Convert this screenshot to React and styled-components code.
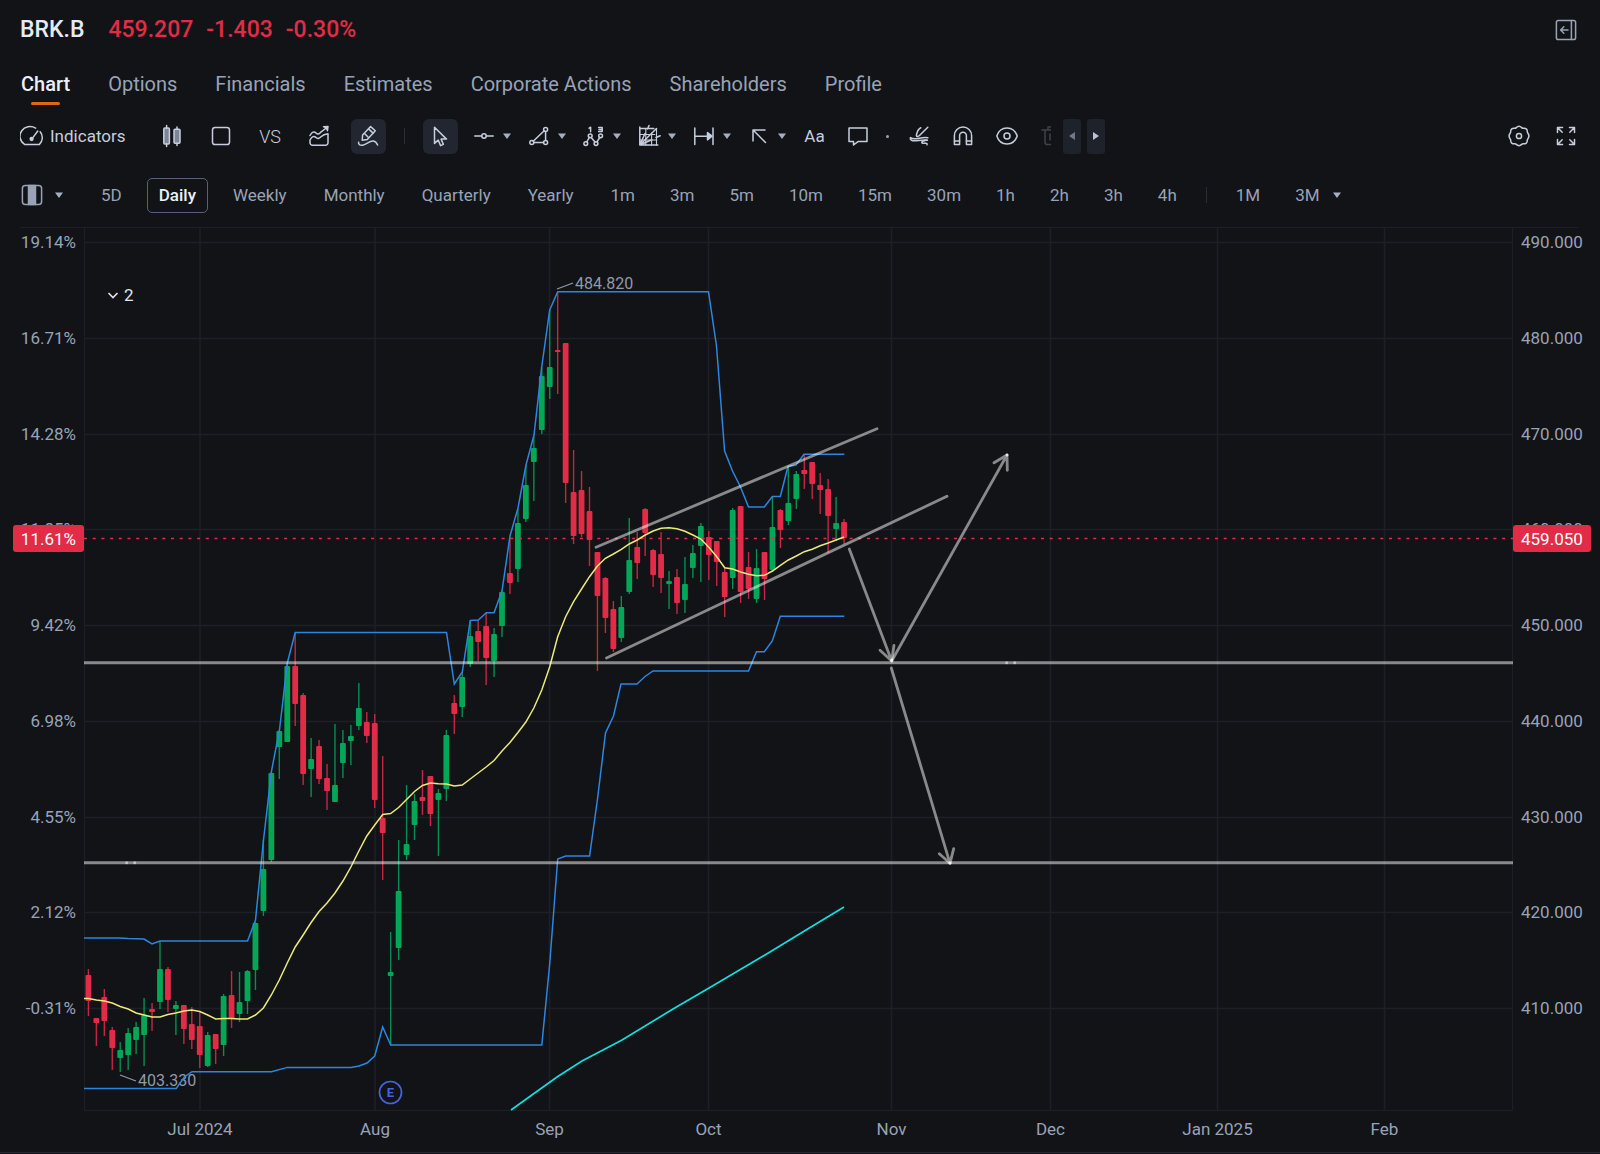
import React from 'react';
import styled, { createGlobalStyle } from 'styled-components';

const GlobalStyle = createGlobalStyle`
  * {
    box-sizing: border-box;
  }
  body {
    margin: 0;
    background: #121316;
    color: #98a3b8;
    font-family: Roboto, 'Liberation Sans', sans-serif;
    font-size: 17px;
  }
  button {
    margin: 0;
    padding: 0;
    border: 0;
    background: none;
    color: inherit;
    font: inherit;
    cursor: pointer;
  }
`;

const Page = styled.div`
  border-bottom: 1px solid #24272f;
`;

const Header = styled.header`
  display: flex;
  align-items: center;
  justify-content: space-between;
  height: 59px;
  padding: 0 17px 0 20px;
`;

const Quote = styled.div`
  display: flex;
  align-items: baseline;
  font-size: 23px;
  font-weight: 500;
`;

const Ticker = styled.h1`
  margin: 0 24px 0 0;
  color: #e4ebf7;
  font-size: 23px;
  font-weight: 500;
`;

const Change = styled.span`
  margin-right: 13px;
  color: #e02d46;
`;

const Tabs = styled.nav`
  display: flex;
  gap: 38px;
  height: 50px;
  padding: 0 21px;
`;

const Tab = styled.a`
  position: relative;
  height: 46px;
  line-height: 50px;
  font-size: 20px;
  text-decoration: none;
  color: ${(p) => (p.$active ? '#eaf0fb' : '#98a3b8')};
  font-weight: ${(p) => (p.$active ? 500 : 400)};
  &::after {
    content: '';
    display: ${(p) => (p.$active ? 'block' : 'none')};
    position: absolute;
    left: 50%;
    bottom: 0;
    width: 29px;
    height: 3px;
    margin-left: -15px;
    border-radius: 2px;
    background: #e0690f;
  }
`;

const Toolbar = styled.div`
  display: flex;
  align-items: center;
  justify-content: space-between;
  height: 54px;
  padding: 0 17px 0 20px;
  color: #c6cede;
`;

const Tools = styled.div`
  display: flex;
  flex-shrink: 0;
  align-items: center;
  gap: ${(p) => p.$gap || 0}px;
  margin-left: ${(p) => p.$before || 0}px;
`;

const Indicators = styled.button`
  display: flex;
  align-items: center;
  gap: 6px;
`;

const ToolButton = styled.button`
  display: flex;
  align-items: center;
  justify-content: center;
  width: 35px;
  height: 35px;
  border-radius: 6px;
  background: ${(p) => (p.$active ? '#222630' : 'transparent')};
`;

const CompareButton = styled(ToolButton)`
  font-size: 18px;
  font-weight: 300;
`;

const DrawButton = styled.button`
  display: flex;
  align-items: center;
  justify-content: center;
  gap: 7px;
  min-width: 24px;
  height: 35px;
`;

const TextButton = styled(DrawButton)`
  width: 26px;
`;

const Divider = styled.span`
  width: 1px;
  height: 16px;
  margin-left: ${(p) => p.$space}px;
  margin-right: ${(p) => p.$space}px;
  background: #292d36;
`;

const Dot = styled.span`
  width: 3px;
  height: 3px;
  border-radius: 2px;
  background: #98a3b8;
`;

const Faded = styled.span`
  flex-shrink: 0;
  width: 12px;
  height: 24px;
  overflow: hidden;
  opacity: 0.25;
`;

const PageButton = styled.button`
  display: flex;
  align-items: center;
  justify-content: center;
  width: 18px;
  height: 35px;
  border-radius: 3px;
  background: #1e222b;
  color: ${(p) => (p.disabled ? '#70798b' : '#b8c2d6')};
`;

const Periods = styled.div`
  display: flex;
  align-items: center;
  height: 65px;
  margin: 0 22px 0 20px;
  border-bottom: 1px solid #1c1f26;
`;

const Period = styled.button`
  display: flex;
  align-items: center;
  gap: 13px;
  height: 35px;
  padding: 0 11px;
  border: 1px solid ${(p) => (p.$active ? '#56627a' : 'transparent')};
  border-radius: 5px;
  color: ${(p) => (p.$active ? '#eaf0fb' : 'inherit')};
  font-weight: ${(p) => (p.$active ? 500 : 400)};
`;

const LayoutButton = styled.button`
  display: flex;
  align-items: center;
  gap: 11px;
`;

const ChartArea = styled.main`
  position: relative;
`;

const Legend = styled.button`
  position: absolute;
  top: 55px;
  left: 106px;
  display: flex;
  align-items: center;
  gap: 4px;
  height: 24px;
  color: #dfe5f0;
`;

const ChartSvg = styled.svg`
  display: block;
  width: 100%;
  height: auto;
  font-family: Roboto, 'Liberation Sans', sans-serif;
  font-size: 17px;
  fill: none;
`;

const AxisText = styled.text`
  fill: #98a3b8;
`;

const TagText = styled.text`
  fill: #ffffff;
`;

const PointText = styled.text`
  fill: #9199a8;
  font-size: 16px;
`;

const Icon = ({ children }) => (
  <svg
    width='24'
    height='24'
    viewBox='0 0 24 24'
    fill='none'
    stroke='currentColor'
    strokeWidth='1.5'
    strokeLinecap='round'
    strokeLinejoin='round'
    aria-hidden='true'
  >
    {children}
  </svg>
);

const Caret = () => (
  <svg width='8' height='6' viewBox='0 0 8 6' aria-hidden='true'>
    <path d='M0 0.5h8L4 6z' fill='#a5afc3' />
  </svg>
);

const icons = {
  gauge: (
    <>
      <path d='M15.6 4.1A10 9.6 0 0 0 4.6 20.4h14.8A10 9.6 0 0 0 20.2 7.8' />
      <path d='M12.3 14.4 17.8 7' />
      <circle cx='11.6' cy='15' r='1.4' fill='currentColor' />
    </>
  ),
  candles: (
    <>
      <rect x='3.8' y='4' width='5.6' height='16' rx='1' fill='#7d8595' />
      <path d='M6.6 1.6V4M6.6 20v2.6' />
      <rect x='14' y='5.2' width='6' height='14' rx='1' fill='#7d8595' />
      <path d='M17 3v2M17 19.4v2' />
    </>
  ),
  square: <rect x='3.5' y='3.5' width='17' height='17' rx='2.6' />,
  area: (
    <>
      <path d='M3 11.5c2-3.5 4-4.5 6-2.5 1.5 1.5 3 1.2 4.500-.6L20 3.500' />
      <path d='M16.5 2.800 21 2.500l-.6 4.300' fill='currentColor' />
      <path d='M3 16c2-3.800 4-4.500 6-2.500 1.500 1.500 3 1.200 5-.8 2-2 4-2.700 7-3v9a2.600 2.600 0 0 1-2.600 2.600H5.600A2.600 2.600 0 0 1 3 18.700z' />
    </>
  ),
  pencil: (
    <>
      <path d='m6.200 16.200.4-5.200 8-8.400 4.700 4.200-8 8.600z' />
      <path d='m12.600 4.900 4.500 4.200' />
      <path d='M8.800 9.800 12 13' />
      <path d='M2.600 18.200c-.6 2.600 2 3.400 4.700 2.800C10.500 20.300 14 16.500 17.500 17c2.200.3 3.200 2 4.100 4' />
    </>
  ),
  cursor: <path d='M6.500 3.200v16.200l3.700-3.300 2.400 5.500 2.800-1.200-2.300-5.300h5.400z' />,
  line: (
    <>
      <path d='M2.800 12h6.700M14.500 12h6.700' />
      <circle cx='12' cy='12' r='2.200' />
    </>
  ),
  triangle: (
    <>
      <circle cx='4.800' cy='18.600' r='2' />
      <circle cx='18.600' cy='18.600' r='2' />
      <circle cx='18.600' cy='5.400' r='2' />
      <path d='M6.800 18.600h9.800M18.600 7.400v9.200M6.200 17.200 17.200 6.800' />
    </>
  ),
  waves: (
    <>
      <circle cx='3.800' cy='19.600' r='1.900' />
      <circle cx='8.200' cy='11.800' r='1.900' />
      <circle cx='14' cy='19.600' r='1.900' />
      <circle cx='18.600' cy='11.800' r='1.900' />
      <path d='m4.800 17.900 2.500-4.400M9.200 13.500l3.800 4.500M15 17.900l2.700-4.400' />
      <path d='M7.200 4.200 8.600 3.200v4.600M16.600 3.500h3.600v4h-3.600M17 5.500h3' />
    </>
  ),
  gann: (
    <>
      <path d='M2.800 3v18h18M2.800 4.600h14M2.800 21 19.500 4.500M2.800 21 8 9.500M10.500 5 12 1.500M2.800 21l12-5.300M19 13.500l4.200-1.800' />
      <path d='M2.800 10.500h15M2.800 16h17M8.800 5v16M14.600 9v12M19.500 4.500V21' strokeWidth='1.100' />
    </>
  ),
  range: (
    <>
      <path d='M2.800 4v16.500M21 4v16.500M3.500 12.200h13' />
      <path d='m15.500 8.600 4.500 3.600-4.500 3.600z' fill='currentColor' />
    </>
  ),
  arrow: <path d='M6 17V6h12M6.300 6.300 18.500 18.500' />,
  comment: <path d='M3 4h18v13.600h-9L7.500 21v-3.400H3z' />,
  brush: (
    <>
      <path d='M20.800 3.200 12.500 11.500c-1.600 1.500-3.600 1.200-3-.8.700-2.400 1.200-5.600 4.300-6.900' />
      <path d='M20.800 13.800c-3.500-.8-7 .2-10.400.8-2.600.4-5 .6-7-1-.8 2.200 1.600 3.300 4.200 3.200 4-.2 8-1 12.800-.6' />
      <path d='M20 16.200c-2 .4-5 .8-5.200 2.200-.1 1.200 2 .9 3.200.8 1.500-.2 2.400.4 2 1.500' />
    </>
  ),
  magnet: (
    <>
      <path d='M3.400 20.600v-9a8.600 8.600 0 0 1 17.200 0v9h-5.200v-9a3.400 3.400 0 0 0-6.800 0v9z' />
      <path d='M3.400 17h5.200M15.400 17h5.200' />
    </>
  ),
  eye: (
    <>
      <path d='M1.800 12C3.600 6.600 7.200 4 12 4s8.400 2.600 10.200 8C20.400 17.400 16.800 20 12 20S3.600 17.400 1.800 12z' />
      <circle cx='12' cy='12' r='3' />
    </>
  ),
  trash: <path d='M3 6h18M6 6v12a2.600 2.600 0 0 0 2.600 2.600h7M11 10v6M9 6V3h6' />,
  settings: (
    <>
      <path d='M9.300 3.600c1.700-1.700 3.700-1.700 5.400 0 .5.500 1 .7 1.700.6 2.400-.3 3.900 1 3.900 3.300 0 .7.200 1.200.6 1.700 1.300 1.800 1.300 3.800 0 5.600-.4.500-.6 1-.6 1.700 0 2.300-1.500 3.600-3.900 3.300-.7-.1-1.200.1-1.700.6-1.700 1.700-3.700 1.700-5.400 0-.5-.5-1-.7-1.700-.6-2.400.3-3.900-1-3.900-3.300 0-.7-.2-1.200-.6-1.700-1.300-1.800-1.300-3.800 0-5.600.4-.5.600-1 .6-1.700 0-2.300 1.500-3.600 3.900-3.300.7.100 1.200-.1 1.700-.6z' />
      <circle cx='12' cy='12' r='2.600' />
    </>
  ),
  expand: (
    <path d='M3.500 8.500v-5h5M3.800 3.800l4.400 4.400M15.500 3.500h5v5M20.200 3.800l-4.400 4.400M3.500 15.500v5h5M3.800 20.200l4.400-4.400M20.500 15.500v5h-5M20.200 20.200l-4.400-4.400' />
  ),
  panel: (
    <>
      <rect x='2.400' y='2.400' width='19.200' height='19.200' rx='1.800' />
      <path d='M17.400 2.400v19.200M14 12H7M9.800 8.800 6.600 12l3.200 3.200' />
    </>
  ),
  columns: (
    <>
      <rect x='2.400' y='2.400' width='19.200' height='19.200' rx='3' />
      <path d='M8.500 2.400h7v19.200h-7z' fill='currentColor' />
    </>
  ),
};

const tabs = [
  'Chart',
  'Options',
  'Financials',
  'Estimates',
  'Corporate Actions',
  'Shareholders',
  'Profile',
];

const drawTools = [
  { name: 'Lines', icon: icons.line },
  { name: 'Shapes', icon: icons.triangle },
  { name: 'Waves', icon: icons.waves },
  { name: 'Gann', icon: icons.gann },
  { name: 'Range', icon: icons.range },
  { name: 'Arrows', icon: icons.arrow },
];

const dayPeriods = ['5D', 'Daily', 'Weekly', 'Monthly', 'Quarterly', 'Yearly'];

const minutePeriods = [
  '1m', '3m', '5m', '10m', '15m', '30m', '1h', '2h', '3h', '4h',
];

// chart coordinates
const LEFT = 84;
const RIGHT = 1513;
const TOP = 228;
const BOTTOM = 1110;
const FIRST_BAR = 88.4;
const BAR_STEP = 7.954;

const rows = [
  { y: 242, percent: '19.14%', price: '490.000' },
  { y: 338, percent: '16.71%', price: '480.000' },
  { y: 434, percent: '14.28%', price: '470.000' },
  { y: 529, percent: '11.85%', price: '460.000' },
  { y: 625, percent: '9.42%', price: '450.000' },
  { y: 721, percent: '6.98%', price: '440.000' },
  { y: 817, percent: '4.55%', price: '430.000' },
  { y: 912, percent: '2.12%', price: '420.000' },
  { y: 1008, percent: '-0.31%', price: '410.000' },
];

const months = [
  { x: 200, label: 'Jul 2024' },
  { x: 375, label: 'Aug' },
  { x: 549.5, label: 'Sep' },
  { x: 708.5, label: 'Oct' },
  { x: 891.5, label: 'Nov' },
  { x: 1050.5, label: 'Dec' },
  { x: 1217.5, label: 'Jan 2025' },
  { x: 1384.5, label: 'Feb' },
];

// [up, high, body top, body bottom, low]
const candles = [
  [0, 969, 975, 1001, 1016], [0, 1018, 1018, 1023, 1046], [0, 989, 997, 1021, 1036],
  [0, 1027, 1030, 1048, 1070], [1, 1042, 1050, 1058, 1072], [1, 1028, 1033, 1055, 1070],
  [1, 1022, 1027, 1040, 1054], [1, 998, 1015, 1035, 1066], [0, 1003, 1009, 1012, 1031],
  [1, 941, 969, 1002, 1009], [0, 967, 969, 1000, 1012], [1, 1001, 1005, 1009, 1035],
  [0, 1005, 1005, 1029, 1044], [0, 1007, 1024, 1040, 1049], [0, 1011, 1026, 1055, 1068],
  [1, 1032, 1035, 1066, 1067], [0, 1034, 1034, 1049, 1064], [1, 994, 996, 1045, 1056],
  [0, 971, 995, 1019, 1028], [1, 972, 1002, 1014, 1022], [1, 970, 971, 1001, 1014],
  [1, 922, 923, 970, 990], [1, 840, 869, 911, 916], [1, 772, 773, 860, 862],
  [1, 730, 731, 747, 779], [1, 664, 666, 742, 742], [0, 633, 666, 704, 726],
  [0, 693, 695, 774, 785], [1, 738, 759, 769, 797], [0, 740, 746, 779, 784],
  [0, 764, 778, 791, 810], [1, 724, 785, 802, 802], [1, 730, 743, 763, 778],
  [1, 725, 736, 741, 765], [1, 683, 708, 726, 730], [0, 712, 722, 736, 743],
  [0, 714, 723, 800, 808], [0, 756, 818, 833, 880], [1, 932, 972, 976, 1045],
  [1, 840, 891, 948, 960], [1, 785, 844, 855, 860], [1, 794, 801, 825, 840],
  [0, 770, 797, 801, 815], [0, 776, 776, 814, 826], [1, 789, 793, 800, 856],
  [1, 730, 735, 789, 801], [0, 695, 703, 714, 734], [1, 672, 677, 707, 717],
  [1, 621, 636, 664, 667], [0, 620, 631, 642, 661], [0, 613, 626, 658, 685],
  [1, 628, 634, 661, 677], [1, 590, 592, 626, 637], [0, 537, 573, 583, 594],
  [1, 509, 523, 569, 582], [1, 465, 485, 519, 522], [1, 436, 448, 462, 501],
  [1, 367, 376, 430, 434], [1, 310, 367, 387, 399], [0, 292, 350, 352, 394],
  [0, 343, 343, 483, 503], [0, 450, 492, 536, 544], [0, 471, 490, 534, 537],
  [0, 487, 511, 540, 566], [0, 552, 552, 596, 671], [0, 577, 578, 618, 633],
  [0, 601, 609, 649, 652], [1, 596, 607, 638, 642], [1, 518, 560, 592, 594],
  [0, 532, 547, 563, 579], [0, 508, 509, 533, 556], [0, 549, 550, 575, 587],
  [0, 532, 554, 578, 593], [1, 571, 581, 584, 609], [0, 569, 577, 603, 614],
  [1, 557, 584, 600, 613], [1, 545, 553, 568, 578], [1, 523, 526, 546, 582],
  [0, 531, 537, 555, 580], [0, 541, 541, 562, 586], [0, 568, 572, 597, 617],
  [1, 508, 510, 578, 589], [0, 506, 506, 592, 603], [0, 552, 567, 589, 599],
  [1, 549, 568, 599, 603], [0, 552, 552, 579, 600], [1, 497, 527, 570, 572],
  [0, 509, 510, 530, 548], [1, 467, 503, 521, 525], [1, 471, 474, 499, 509],
  [0, 455, 470, 474, 489], [0, 462, 462, 484, 499], [0, 473, 485, 490, 514],
  [0, 479, 489, 516, 553], [1, 497, 523, 529, 541], [0, 519, 522, 538, 544],
];

const average = [
  998.5, 1000, 1001, 1003, 1006.5, 1009, 1013, 1015, 1017, 1017, 1014.5, 1013,
  1011, 1010, 1011.5, 1015, 1019, 1018.5, 1018.5, 1019, 1019, 1015, 1008, 995,
  980, 963, 947, 935, 922.5, 911.5, 903, 893, 881, 867, 851, 836, 825, 814.5,
  813.5, 807.5, 799.5, 791.5, 785.5, 783, 783.7, 784, 786, 785, 779, 773, 767,
  760.5, 751, 742.5, 732.5, 722, 708, 690, 666.7, 636.7, 616.7, 601.7, 589,
  576.7, 566, 558.3, 554, 549.3, 544, 540, 535, 531, 528.3, 527.7, 528.7, 531.3,
  535, 539, 547.3, 556.7, 567.7, 569, 572, 574.3, 575.7, 575.3, 571, 565.3, 560,
  556, 551.7, 549.3, 545.7, 543, 540, 537,
];

const upperBand =
  '84,938 120,938 128,938.5 144,939 152,944 160,941 247.5,941 255.5,920 263.5,840 271.5,771 279.5,730 287.3,663 295.2,632.5 446.5,632.5 454.3,684 462.3,672 470.3,620.5 478.3,620 486.3,612.7 494,612.7 502,591 510,536 518,508 526,465 534,435 541.7,367 549.7,310 557.7,291.7 708.5,291.7 716.5,346 724.6,451 732.5,471 740.5,487 748.5,507 764.3,507 772.3,496.5 780.3,496.5 788,466.5 796,465 804,454.3 844.3,454.3';

const lowerBand =
  '84,1088.5 176.3,1088.5 184.3,1077 192,1071.7 271.5,1071.7 287.3,1067.4 351,1067.4 359,1066 367,1063 374.7,1056 382.7,1027 390.7,1045 541.8,1045 549.7,964 557.7,859 565.7,856 589.6,856 597.5,799 605.5,733 613.5,716 621,684 637,684 645,676.5 653,671 748.5,671 756.5,651.7 764.3,651.7 772.3,641 780.3,616.3 844.3,616.3';

const longAverage =
  '511,1110 557,1077 582,1061 622,1040 673,1009 709,988 765,955 806,930 844,907';

const levels = [662.7, 862.7];

const drawings = [
  'M596 547.3 877 428.7',
  'M606.5 658 947 496.3',
  'M849.3 549 891.7 661M880 650.3 891.7 661 894 645.3',
  'M891.7 661 1007 455M994 462.7 1007 455 1007.3 470.3',
  'M891.3 668 950 863.3M939.3 853.7 950 863.3 953.7 848.7',
];

const handles = [
  { x: 1006.7, y: 662.7, opacity: 0.5 },
  { x: 1014.7, y: 662.7, opacity: 0.5 },
  { x: 126.7, y: 862.7, opacity: 0.5 },
  { x: 134.7, y: 862.7, opacity: 0.5 },
  { x: 891.7, y: 660, opacity: 0.8 },
  { x: 1007, y: 455, opacity: 0.8 },
  { x: 950, y: 863, opacity: 0.8 },
];

const barX = (i) => FIRST_BAR + i * BAR_STEP;

const Candle = ({ index, data }) => {
  const [up, high, top, bottom, low] = data;
  const x = barX(index);
  const color = up ? '#04a657' : '#e22c47';
  return (
    <g>
      <path d={`M${x} ${high}V${low}`} stroke={color} strokeWidth='1.4' opacity='0.85' />
      <rect x={x - 2.9} y={top} width='5.8' height={bottom - top} rx='1' fill={color} />
    </g>
  );
};

const StockChart = () => {
  return (
    <ChartSvg viewBox='0 228 1600 924' role='img' aria-label='BRK.B'>
      <g stroke='#1c2026' strokeWidth='1.5'>
        {rows.map((r) => (
          <path key={r.price} d={`M${LEFT} ${r.y + 0.5}H${RIGHT}`} />
        ))}
        {months.map((m) => (
          <path key={m.label} d={`M${m.x} ${TOP}V${BOTTOM}`} />
        ))}
      </g>
      <path d='M84.5 228V1110.5H1512.5V228' stroke='#1c2026' />

      {rows.map((r) => (
        <g key={r.price}>
          <AxisText x='76' y={r.y + 6} textAnchor='end'>
            {r.percent}
          </AxisText>
          <AxisText x='1521' y={r.y + 6}>
            {r.price}
          </AxisText>
        </g>
      ))}
      {months.map((m) => (
        <AxisText key={m.label} x={m.x} y='1135' textAnchor='middle'>
          {m.label}
        </AxisText>
      ))}

      {candles.map((c, i) => (
        <Candle key={i} index={i} data={c} />
      ))}
      <path d='M557 289 573 283M120 1075 136 1081' stroke='#9199a8' strokeWidth='1.3' />
      <PointText x='575' y='289'>484.820</PointText>
      <PointText x='138' y='1086'>403.330</PointText>

      <path
        d='M84 538.5H1513'
        stroke='#e22c47'
        strokeWidth='1.3'
        strokeDasharray='3 5.7'
      />
      <polyline points={upperBand} stroke='#2b86e0' strokeWidth='1.5' />
      <polyline points={lowerBand} stroke='#2b86e0' strokeWidth='1.5' />
      <polyline
        points={`84,998.5 ${average.map((y, i) => `${barX(i)},${y}`).join(' ')}`}
        stroke='#ece97a'
        strokeWidth='1.5'
      />
      <polyline points={longAverage} stroke='#0fe0df' strokeWidth='1.7' />

      <g stroke='#ffffff' strokeOpacity='0.5' strokeLinejoin='round'>
        {levels.map((y) => (
          <path key={y} d={`M${LEFT} ${y}H${RIGHT}`} strokeWidth='3' />
        ))}
        {drawings.map((d) => (
          <path key={d} d={d} strokeWidth='2.8' strokeLinecap='round' />
        ))}
      </g>
      {handles.map((h) => (
        <circle
          key={`${h.x}-${h.y}`}
          cx={h.x}
          cy={h.y}
          r='1.5'
          fill='#ffffff'
          fillOpacity={h.opacity}
        />
      ))}

      <circle cx='390.5' cy='1092.5' r='11' stroke='#4463e0' strokeWidth='1.7' />
      <text x='390.5' y='1097' textAnchor='middle' fontSize='13' fontWeight='700' fill='#4463e0'>
        E
      </text>

      <rect x='13' y='525' width='71' height='27' rx='3' fill='#e22c47' />
      <TagText x='76' y='544.5' textAnchor='end'>11.61%</TagText>
      <rect x='1513' y='525' width='78' height='27' rx='3' fill='#e22c47' />
      <TagText x='1521' y='544.5'>459.050</TagText>
    </ChartSvg>
  );
};

export default function App() {
  return (
    <>
      <GlobalStyle />
      <Page>
        <Header>
          <Quote>
            <Ticker>BRK.B</Ticker>
            <Change>459.207</Change>
            <Change>-1.403</Change>
            <Change>-0.30%</Change>
          </Quote>
          <ToolButton aria-label='Toggle panel'>
            <Icon>{icons.panel}</Icon>
          </ToolButton>
        </Header>

        <Tabs>
          {tabs.map((t, i) => (
            <Tab key={t} href={`#${t}`} $active={i === 0}>
              {t}
            </Tab>
          ))}
        </Tabs>

        <Toolbar>
          <Tools>
            <Indicators>
              <Icon>{icons.gauge}</Icon>
              Indicators
            </Indicators>
            <Tools $gap={14} $before={29}>
              <ToolButton aria-label='Chart type'><Icon>{icons.candles}</Icon></ToolButton>
              <ToolButton aria-label='Layout'><Icon>{icons.square}</Icon></ToolButton>
              <CompareButton>VS</CompareButton>
              <ToolButton aria-label='Overlay'><Icon>{icons.area}</Icon></ToolButton>
              <ToolButton aria-label='Draw' $active><Icon>{icons.pencil}</Icon></ToolButton>
            </Tools>
            <Divider $space={18} />
            <ToolButton aria-label='Select' $active><Icon>{icons.cursor}</Icon></ToolButton>
            <Tools $gap={16} $before={14}>
              {drawTools.map((t) => (
                <DrawButton key={t.name} aria-label={t.name}>
                  <Icon>{t.icon}</Icon>
                  <Caret />
                </DrawButton>
              ))}
              <TextButton>Aa</TextButton>
            </Tools>
            <Tools $gap={16} $before={18}>
              <DrawButton aria-label='Comment'><Icon>{icons.comment}</Icon></DrawButton>
              <Dot />
            </Tools>
            <Tools $gap={20} $before={18}>
              <DrawButton aria-label='Brush'><Icon>{icons.brush}</Icon></DrawButton>
              <DrawButton aria-label='Magnet'><Icon>{icons.magnet}</Icon></DrawButton>
              <DrawButton aria-label='Show drawings'><Icon>{icons.eye}</Icon></DrawButton>
              <Faded><Icon>{icons.trash}</Icon></Faded>
            </Tools>
            <Tools $gap={6} $before={12}>
              <PageButton aria-label='Previous tools' disabled>
                <svg width='6' height='8' viewBox='0 0 6 8'><path d='M6 0v8L0 4z' fill='currentColor' /></svg>
              </PageButton>
              <PageButton aria-label='Next tools'>
                <svg width='6' height='8' viewBox='0 0 6 8'><path d='M0 0v8l6-4z' fill='currentColor' /></svg>
              </PageButton>
            </Tools>
          </Tools>
          <Tools $gap={12}>
            <ToolButton aria-label='Settings'><Icon>{icons.settings}</Icon></ToolButton>
            <ToolButton aria-label='Full screen'><Icon>{icons.expand}</Icon></ToolButton>
          </Tools>
        </Toolbar>

        <Periods>
          <LayoutButton aria-label='Columns'>
            <Icon>{icons.columns}</Icon>
            <Caret />
          </LayoutButton>
          <Tools $gap={13} $before={26}>
            {dayPeriods.map((p) => (
              <Period key={p} $active={p === 'Daily'}>
                {p}
              </Period>
            ))}
          </Tools>
          <Tools $gap={11} $before={13}>
            {minutePeriods.map((p) => (
              <Period key={p}>{p}</Period>
            ))}
          </Tools>
          <Divider $space={17} />
          <Tools $gap={11}>
            <Period>1M</Period>
            <Period>
              3M
              <Caret />
            </Period>
          </Tools>
        </Periods>

        <ChartArea>
          <StockChart />
          <Legend>
            <svg width='14' height='14' viewBox='0 0 14 14' fill='none' aria-hidden='true'>
              <path d='m2.5 5 4.5 4.5L11.5 5' stroke='currentColor' strokeWidth='1.6' />
            </svg>
            2
          </Legend>
        </ChartArea>
      </Page>
    </>
  );
}
